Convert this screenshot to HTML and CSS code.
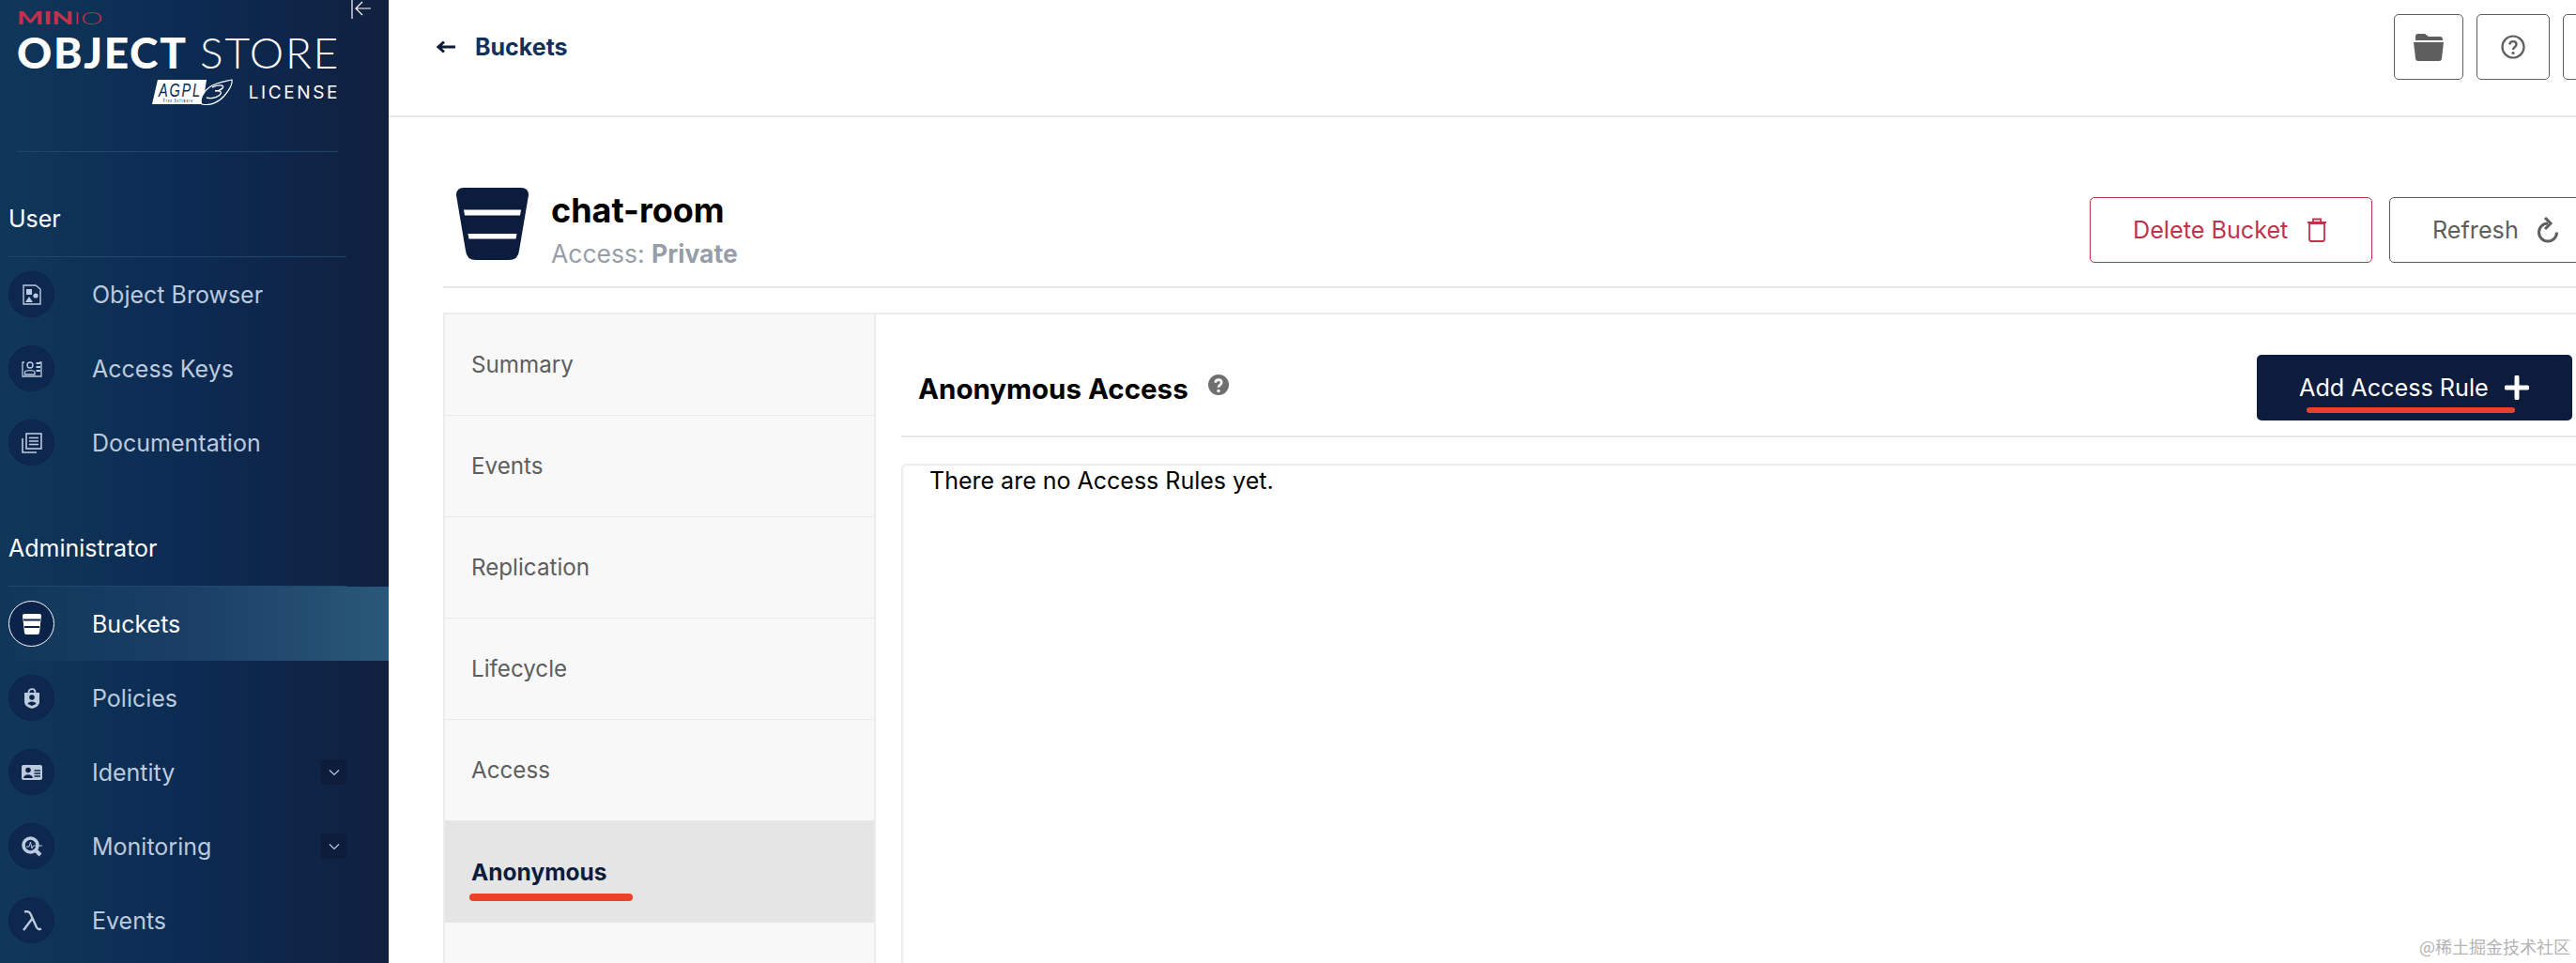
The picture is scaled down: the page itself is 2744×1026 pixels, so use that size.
FILE: index.html
```html
<!DOCTYPE html>
<html lang="en">

<head>
    <meta charset="UTF-8">
    <meta name="viewport" content="width=device-width, initial-scale=1.0">
    <title>MinIO Object Store</title>
    <link rel="stylesheet" href="styles.css">
</head>

<body>
    <aside class="sidebar">
        <div class="brand">
            <svg class="collapse-icon" viewBox="0 0 22 22"><path d="M1 0V20M21 9H6M12 2L5 9L12 16" fill="none" stroke="#ffffff" stroke-width="1.2"/></svg>
            <div class="brand-minio"><b>MIN</b><span>IO</span></div>
            <div class="brand-product"><b>OBJECT</b> <span>STORE</span></div>
            <div class="brand-license">
                <svg class="agpl" viewBox="0 0 86 28">
                    <path d="M6 1H58L54 27H0Z" fill="#ffffff"/>
                    <path d="M53 27C62 29 71 25 77 18C82 12 86 6 85 1C77 3 68 4 61 9C55 13 50 22 53 27Z" fill="#0c2a52" stroke="#ffffff" stroke-width="1.2"/>
                    <text x="7" y="19" class="agpl-text" textLength="46" lengthAdjust="spacingAndGlyphs">AGPL</text>
                    <text x="12" y="25" class="agpl-small" textLength="32" lengthAdjust="spacingAndGlyphs">Free Software</text>
                    <path d="M64 9C70 6 78 6 75 10C73 12 70 13 67 13C74 12 75 15 71 18C67 21 61 21 58 20" fill="none" stroke="#ffffff" stroke-width="1.4"/>
                </svg>
                <span>LICENSE</span>
            </div>
        </div>

        <div class="nav-title">User</div>
        <a class="nav-item">
            <span class="nav-icon"><svg viewBox="0 0 20 22"><path d="M1 1H14L19 5V21H1Z" fill="none" stroke="currentColor" stroke-width="1.4"/><rect x="4" y="5" width="6" height="6" fill="currentColor"/><circle cx="14" cy="12" r="2.6" fill="currentColor"/><path d="M7 13L11 19H3Z" fill="currentColor"/></svg></span>
            Object Browser
        </a>
        <a class="nav-item">
            <span class="nav-icon"><svg viewBox="0 0 22 18"><path d="M3 2H1V17H21V2H19" fill="none" stroke="currentColor" stroke-width="1.3"/><circle cx="9" cy="5" r="3" fill="none" stroke="currentColor" stroke-width="1.4"/><path d="M3.5 15V12.5C3.5 10 14 10 14 12.5V15Z" fill="none" stroke="currentColor" stroke-width="1.3"/><path d="M15.5 3H20M15.5 7H20M15.5 11H20" stroke="currentColor" stroke-width="2"/></svg></span>
            Access Keys
        </a>
        <a class="nav-item">
            <span class="nav-icon"><svg viewBox="0 0 22 22"><path d="M1 6V21H16" fill="none" stroke="currentColor" stroke-width="1.6"/><rect x="5" y="1" width="16" height="16" fill="none" stroke="currentColor" stroke-width="1.6"/><path d="M8 5.5H18M8 9H18M8 12.500H18" stroke="currentColor" stroke-width="1.6"/></svg></span>
            Documentation
        </a>

        <div class="nav-title nav-title-admin">Administrator</div>
        <a class="nav-item active">
            <span class="nav-icon"><svg viewBox="0 0 22 22"><path d="M1 2Q1 0 3 0H19Q21 0 21 2L19 20Q19 22 17 22H5Q3 22 3 20Z" fill="currentColor"/><path d="M2 6.500H20M3 14H19" stroke="#0c2349" stroke-width="2"/></svg></span>
            Buckets
        </a>
        <a class="nav-item">
            <span class="nav-icon"><svg viewBox="0 0 18 22"><path d="M5.500 6V4.500C5.500 0 12.500 0 12.500 4.500V6" fill="none" stroke="currentColor" stroke-width="1.800"/><path d="M1 5H17V15Q17 20 9 22Q1 20 1 15Z" fill="currentColor"/><circle cx="9" cy="10" r="2.800" fill="#0c2349"/><path d="M4.500 17C5 13.500 13 13.500 13.500 17L9 19Z" fill="#0c2349"/></svg></span>
            Policies
        </a>
        <a class="nav-item has-sub">
            <span class="nav-icon"><svg viewBox="0 0 22 16"><rect width="22" height="16" rx="2" fill="currentColor"/><circle cx="7" cy="5.500" r="2.800" fill="#0c2349"/><path d="M2 14C2.500 9 11.500 9 12 14Z" fill="#0c2349"/><path d="M13.500 6H20M13.500 9H20M13.500 12H20" stroke="#0c2349" stroke-width="1.500"/></svg></span>
            Identity
            <span class="nav-chevron"><svg viewBox="0 0 12 8"><path d="M1 1.500L6 6.500L11 1.500" fill="none" stroke="currentColor" stroke-width="1.200"/></svg></span>
        </a>
        <a class="nav-item has-sub">
            <span class="nav-icon"><svg viewBox="0 0 22 22"><circle cx="9.500" cy="9.500" r="7.500" fill="none" stroke="currentColor" stroke-width="3.600"/><path d="M14.500 14.500L20 20" stroke="currentColor" stroke-width="4"/><path d="M5 11H8L9.500 6L11 13L12.500 10H22" fill="none" stroke="currentColor" stroke-width="1"/></svg></span>
            Monitoring
            <span class="nav-chevron"><svg viewBox="0 0 12 8"><path d="M1 1.500L6 6.500L11 1.500" fill="none" stroke="currentColor" stroke-width="1.200"/></svg></span>
        </a>
        <a class="nav-item">
            <span class="nav-icon"><svg viewBox="0 0 22 22"><path d="M3 1.500C8 0 9.500 3 11 7L16 18C17 20 19 20.500 21 19.500M11.500 8.500L2 21" fill="none" stroke="currentColor" stroke-width="2.400"/></svg></span>
            Events
        </a>
    </aside>

    <main class="main">
        <header class="topbar">
            <a class="back-link">
                <svg class="back-arrow" viewBox="0 0 20 14"><path d="M20 7H3M8 1.500L2 7L8 12.500" fill="none" stroke="#0c1c3d" stroke-width="3"/></svg>
                Buckets
            </a>
            <div class="top-actions">
                <button class="top-btn top-btn-folder"><svg viewBox="0 0 34 30" width="34" height="30"><path d="M3 8V4Q3 1 6 1H13L17 4H29Q32 4 32 7V8Z" fill="#5e5e5e"/><path d="M1 10H33L31 27Q31 30 28 30H6Q3 30 3 27Z" fill="#5e5e5e"/></svg></button>
                <button class="top-btn top-btn-help"><svg viewBox="0 0 26 26" width="26" height="26"><circle cx="13" cy="13" r="11.500" fill="none" stroke="#5e5e5e" stroke-width="2.200"/><path d="M9.500 10.500C9.500 6 16.500 6 16.500 10.500C16.500 13 13 13 13 16" fill="none" stroke="#5e5e5e" stroke-width="2.400"/><circle cx="13" cy="19.500" r="1.600" fill="#5e5e5e"/></svg></button>
                <button class="top-btn top-btn-more"></button>
            </div>
        </header>

        <div class="page">
            <div class="bucket-head">
                <svg class="bucket-icon" viewBox="0 0 77 77">
                    <path d="M0 8Q0 0 8 0H69Q77 0 77 8L67 67Q66 77 56 77H21Q11 77 10 67Z" fill="#0c1c3d"/>
                    <path d="M8 23.500H69L68 29.500H9ZM12.500 49H64.500L63.500 54.500H13.500Z" fill="#ffffff"/>
                </svg>
                <div class="bucket-info">
                    <h1>chat-room</h1>
                    <div class="bucket-access">Access: <b>Private</b></div>
                </div>
                <div class="bucket-actions">
                    <button class="btn btn-danger">Delete Bucket
                        <svg viewBox="0 0 22 26" width="22" height="26"><path d="M3 6H19V23Q19 25 17 25H5Q3 25 3 23ZM1 5H21M7 4V1.500H15V4" fill="none" stroke="currentColor" stroke-width="1.800"/></svg>
                    </button>
                    <button class="btn btn-plain">Refresh
                        <svg viewBox="0 0 24 28" width="24" height="28"><path d="M21.500 16.500A9.500 9.500 0 1 1 12 7" fill="none" stroke="currentColor" stroke-width="3"/><path d="M9 1L15 7L9 13" fill="none" stroke="currentColor" stroke-width="3"/></svg>
                    </button>
                </div>
            </div>

            <div class="bucket-body">
                <nav class="tabs">
                    <a class="tab">Summary</a>
                    <a class="tab">Events</a>
                    <a class="tab">Replication</a>
                    <a class="tab">Lifecycle</a>
                    <a class="tab">Access</a>
                    <a class="tab active">Anonymous<span class="mark mark-tab"></span></a>
                </nav>
                <section class="panel">
                    <div class="panel-head">
                        <h2>Anonymous Access</h2>
                        <svg class="panel-help" viewBox="0 0 24 24"><circle cx="12" cy="12" r="12" fill="#6f6f6f"/><path d="M8.500 9.500C8.500 5 15.500 5 15.500 9.500C15.500 12 12 12 12 15" fill="none" stroke="#ffffff" stroke-width="2.800"/><circle cx="12" cy="19" r="1.800" fill="#ffffff"/></svg>
                        <button class="btn btn-primary">Add Access Rule
                            <svg viewBox="0 0 26 26" width="26" height="26"><path d="M13 2V24M2 13H24" stroke="#ffffff" stroke-width="5" stroke-linecap="round"/></svg>
                            <span class="mark mark-btn"></span>
                        </button>
                    </div>
                    <div class="rules-box">There are no Access Rules yet.</div>
                </section>
            </div>
        </div>
    </main>

    <div class="watermark">@稀土掘金技术社区</div>
</body>

</html>
```

FILE: styles.css
```css
* {
    box-sizing: border-box;
}

html,
body {
    margin: 0;
    height: 1026px;
    overflow: hidden;
}

body {
    display: flex;
    background-color: #ffffff;
    color: #000000;
    font-family: Inter, "Noto Sans", sans-serif;
}

button {
    font-family: inherit;
}

/* sidebar */
.sidebar {
    width: 414px;
    flex: none;
    height: 1026px;
    color: #bccadd;
    background: linear-gradient(90deg, #10375a 0%, #0c2a52 50%, #11203f 100%);
}

.brand {
    position: relative;
    height: 162px;
    margin: 0 54px 0 18px;
    padding-top: 9px;
    border-bottom: 1px solid #21456b;
}

.collapse-icon {
    position: absolute;
    left: 356px;
    top: 0;
    width: 22px;
    height: 22px;
}

.brand-minio {
    height: 20px;
    font-family: Lato, sans-serif;
    font-size: 18px;
    line-height: 20px;
    color: #c1314b;
    transform: scaleX(1.65);
    transform-origin: left center;
}

.brand-minio b {
    font-weight: 900;
}

.brand-minio span {
    font-weight: 300;
}

.brand-product {
    margin-top: 2px;
    height: 50px;
    font-family: Lato, sans-serif;
    font-size: 46px;
    line-height: 50px;
    letter-spacing: 1.700px;
    color: #ffffff;
    white-space: nowrap;
}

.brand-product b {
    font-weight: 900;
}

.brand-product span {
    font-weight: 300;
}

.brand-license {
    display: flex;
    align-items: center;
    justify-content: flex-end;
    gap: 17px;
    margin-top: 3px;
    color: #ffffff;
    font-size: 19px;
    letter-spacing: 2.600px;
}

.brand-license span {
    margin-right: -2px;
}

.agpl {
    width: 86px;
    height: 28px;
}

.agpl-text {
    font-family: "Liberation Sans", sans-serif;
    font-size: 21px;
    font-style: italic;
    fill: #0c2a52;
}

.agpl-small {
    font-family: "Liberation Sans", sans-serif;
    font-size: 5px;
    font-weight: bold;
    fill: #0c2a52;
}

.nav-title {
    width: 360px;
    margin-left: 9px;
    padding: 51px 0 20px 0;
    font-size: 25px;
    line-height: 40px;
    color: #ffffff;
    border-bottom: 1px solid #21456b;
}

.nav-title-admin {
    padding-top: 53px;
    padding-bottom: 20px;
}

.nav-item {
    display: flex;
    align-items: center;
    gap: 40px;
    height: 79px;
    padding-left: 9px;
    font-size: 25px;
}

.nav-item.active {
    color: #ffffff;
    background: linear-gradient(90deg, #10375a 0%, #1b3f66 50%, #2a5878 100%);
}

.nav-icon {
    display: flex;
    align-items: center;
    justify-content: center;
    width: 49px;
    height: 49px;
    flex: none;
    border-radius: 50%;
    background-color: #0e274e;
    border: 1px solid #0c2347;
}

.nav-item.active .nav-icon {
    background-color: #0c2349;
    border-color: #ffffff;
}

.nav-icon svg {
    width: 22px;
    height: 22px;
}

.nav-chevron {
    display: flex;
    align-items: center;
    justify-content: center;
    width: 27px;
    height: 27px;
    margin-left: auto;
    margin-right: 45px;
    border-radius: 3px;
    background-color: #0e1c3c;
}

.nav-chevron svg {
    width: 12px;
    height: 8px;
}

/* main */
.main {
    flex: none;
    width: 2420px;
    height: 1026px;
    overflow: hidden;
}

.topbar {
    display: flex;
    align-items: center;
    justify-content: space-between;
    height: 125px;
    padding: 0 0 23px 51px;
    border-bottom: 2px solid #e8e8e8;
}

.back-link {
    display: flex;
    align-items: center;
    gap: 21px;
    font-size: 25px;
    font-weight: 700;
    color: #12305a;
}

.back-arrow {
    width: 20px;
    height: 14px;
}

.top-actions {
    display: flex;
    gap: 14px;
    padding-right: 24px;
}

.top-btn {
    display: flex;
    align-items: center;
    justify-content: center;
    height: 70px;
    padding: 0;
    background: #ffffff;
    border: 1.500px solid #5e5e5e;
    border-radius: 5px;
}

.top-btn-folder {
    width: 74px;
}

.top-btn-help {
    width: 78px;
}

.top-btn-more {
    width: 80px;
}

.page {
    padding: 0 58px;
}

.bucket-head {
    display: flex;
    align-items: flex-start;
    height: 182px;
    padding-top: 75px;
    border-bottom: 2px solid #e8e8e8;
}

.bucket-icon {
    width: 77px;
    height: 77px;
    flex: none;
    margin-left: 14px;
}

.bucket-info {
    margin-left: 24px;
}

.bucket-info h1 {
    margin: 1px 0 0;
    font-size: 36px;
    line-height: 46px;
    font-weight: 700;
}

.bucket-access {
    margin-top: 6px;
    font-size: 26.500px;
    line-height: 34px;
    color: #969fa9;
}

.bucket-actions {
    display: flex;
    gap: 18px;
    margin-left: auto;
    margin-top: 10px;
}

.btn {
    position: relative;
    display: flex;
    align-items: center;
    gap: 20px;
    height: 70px;
    padding: 0 0 0 45px;
    font-size: 25.200px;
    background: #ffffff;
    border-radius: 5px;
}

.btn-danger {
    width: 301px;
    color: #c0334a;
    border: 1.500px solid #c0334a;
}

.btn-plain {
    width: 231px;
    gap: 19px;
    color: #5e5e5e;
    border: 1.500px solid #5e5e5e;
}

.btn-primary {
    width: 336px;
    gap: 17px;
    margin-left: auto;
    margin-right: 36px;
    color: #ffffff;
    background-color: #0c1c3d;
    border: none;
}

.mark {
    position: absolute;
    border-radius: 4px;
    background-color: #ea4127;
}

.mark-btn {
    left: 53px;
    top: 56px;
    width: 222px;
    height: 6px;
}

.mark-tab {
    left: 26px;
    top: 77px;
    width: 174px;
    height: 8px;
}

.bucket-body {
    display: flex;
    margin-top: 26px;
    border-top: 2px solid #ececec;
}

.tabs {
    width: 461px;
    height: 700px;
    flex: none;
    background-color: #f8f8f8;
    border-left: 2px solid #ececec;
    border-right: 2px solid #ececec;
}

.tab {
    position: relative;
    display: flex;
    align-items: center;
    height: 108px;
    padding-left: 28px;
    font-size: 24.200px;
    color: #5e5e5e;
    border-bottom: 1px solid #e8e8e8;
}

.tab.active {
    font-size: 24.500px;
    font-weight: 700;
    color: #0c1c3d;
    background-color: #e5e5e5;
}

.panel {
    flex: 1;
    margin-left: 27px;
}

.panel-head {
    display: flex;
    align-items: center;
    height: 131px;
    padding: 44px 0 17px 18px;
    border-bottom: 2px solid #e8e8e8;
}

.panel-head h2 {
    margin: 2px 0 0;
    font-size: 29.500px;
    font-weight: 700;
}

.panel-help {
    width: 22px;
    height: 22px;
    margin: 0 0 6px 21px;
}

.rules-box {
    height: 600px;
    margin-top: 28px;
    padding: 0 28px;
    font-size: 25px;
    line-height: 32px;
    border: 2px solid #ececec;
    border-radius: 6px 0 0 0;
}

.watermark {
    position: absolute;
    left: 2577px;
    top: 996px;
    font-family: "Noto Sans CJK SC", sans-serif;
    font-size: 18px;
    line-height: 24px;
    color: #b4b4b4;
}
```
